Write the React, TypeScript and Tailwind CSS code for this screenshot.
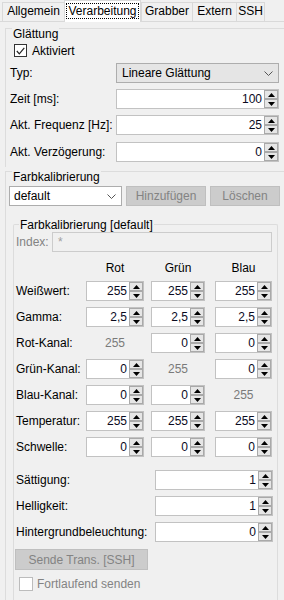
import React from 'react';

const FONT = "font-['Liberation_Sans',Arial,sans-serif]";

function Arrow({ up }: { up?: boolean }) {
  return (
    <div className="flex-1 flex items-center justify-center bg-[#e6e6e6] border border-[#a9a9a9]">
      <svg width="7" height="4" viewBox="0 0 7 4">
        <path d={up ? 'M0 4 L3.5 0 L7 4Z' : 'M0 0 L3.5 4 L7 0Z'} fill="#000" />
      </svg>
    </div>
  );
}

function Spin({ value, w }: { value: string; w: string }) {
  return (
    <div className={`${w} h-[20px] flex border border-[#c2c2c2] bg-white`}>
      <span className="flex-1 text-right pr-[2px] leading-[18px] text-[#0a0a1e]">{value}</span>
      <div className="w-[14px] flex flex-col">
        <Arrow up />
        <Arrow />
      </div>
    </div>
  );
}

function Chevron() {
  return (
    <svg width="9" height="5" viewBox="0 0 9 5" className="shrink-0">
      <path d="M0.5 0.5 L4.5 4.5 L8.5 0.5" fill="none" stroke="#555" strokeWidth="1" />
    </svg>
  );
}

function Tab({ label, w, active }: { label: string; w: string; active?: boolean }) {
  if (active) {
    return (
      <div className={`${w} h-[22px] -mb-px bg-white border-t border-l border-r border-[#d9d9d9] flex items-start justify-center pt-[2px]`}>
        <span className="border border-dotted border-black px-[1px] leading-[14px]">{label}</span>
      </div>
    );
  }
  return (
    <div className={`${w} h-[19px] border-t border-l border-[#d9d9d9] flex items-center justify-center leading-[14px] pb-[2px]`}>
      {label}
    </div>
  );
}

function ColRow({ label, cells }: { label: string; cells: string[] }) {
  const widths = ['w-[58px]', 'w-[54px]', 'w-[57px]'];
  const margins = ['ml-0', 'ml-[7px]', 'ml-[10px]'];
  return (
    <div className="flex items-center h-[20px] mt-[6px]">
      <span className="w-[72px] pl-[2px]">{label}</span>
      {cells.map((c, i) =>
        c.startsWith('#') ? (
          <span key={i} className={`${widths[i]} ${margins[i]} text-center text-[#7a7a7a]`}>{c.slice(1)}</span>
        ) : (
          <div key={i} className={margins[i]}>
            <Spin value={c} w={widths[i]} />
          </div>
        ),
      )}
    </div>
  );
}

export default function App() {
  return (
    <div className={`w-[284px] h-[600px] overflow-hidden bg-[#f0f0f0] text-[12px] text-black ${FONT}`}>
      {/* Tabs */}
      <div className="h-[22px] flex items-end pl-[2px] border-b border-[#d9d9d9]">
        <Tab label="Allgemein" w="w-[62px]" />
        <Tab label="Verarbeitung" w="w-[77px]" active />
        <Tab label="Grabber" w="w-[51px]" />
        <Tab label="Extern" w="w-[44px]" />
        <div className="w-[29px] h-[19px] border-t border-l border-r border-[#d9d9d9] flex items-center justify-center leading-[14px] pb-[2px]">SSH</div>
      </div>

      <div className="pl-[5px] pt-[6px]">
        {/* Glättung */}
        <div className="border-t border-l border-[#dcdcdc] pb-[5px]">
          <div className="-mt-[2px] ml-[6px] w-fit px-[1px] bg-[#f0f0f0] leading-[14px]">Glättung</div>
          <div className="flex items-center h-[13px] mt-[3px] ml-[8px]">
            <div className="w-[13px] h-[13px] border border-[#333] bg-white flex items-center justify-center">
              <svg width="9" height="8" viewBox="0 0 9 8">
                <path d="M0.8 4 L3.3 6.8 L8.3 0.8" fill="none" stroke="#222" strokeWidth="1.2" />
              </svg>
            </div>
            <span className="ml-[5px]">Aktiviert</span>
          </div>
          <div className="flex items-center h-[20px] mt-[6px]">
            <span className="w-[110px] pl-[4px]">Typ:</span>
            <div className="w-[163px] h-[20px] flex items-center justify-between px-[5px] bg-[#e5e5e5] border border-[#adadad]">
              <span>Lineare Glättung</span>
              <Chevron />
            </div>
          </div>
          <div className="flex items-center h-[20px] mt-[6px]">
            <span className="w-[110px] pl-[4px]">Zeit [ms]:</span>
            <Spin value="100" w="w-[163px]" />
          </div>
          <div className="flex items-center h-[20px] mt-[6px]">
            <span className="w-[110px] pl-[4px]">Akt. Frequenz [Hz]:</span>
            <Spin value="25" w="w-[163px]" />
          </div>
          <div className="flex items-center h-[20px] mt-[7px]">
            <span className="w-[110px] pl-[4px]">Akt. Verzögerung:</span>
            <Spin value="0" w="w-[163px]" />
          </div>
        </div>

        {/* Farbkalibrierung */}
        <div className="border-t border-l border-[#dcdcdc] mt-[4px]">
          <div className="-mt-[2px] ml-[6px] w-fit px-[1px] bg-[#f0f0f0] leading-[14px]">Farbkalibrierung</div>
          <div className="flex items-center h-[20px] mt-[2px]">
            <div className="ml-[3px] w-[113px] h-[20px] flex items-center justify-between pl-[4px] pr-[5px] bg-white border border-[#adadad]">
              <span>default</span>
              <Chevron />
            </div>
            <div className="ml-[4px] w-[80px] h-[20px] flex items-center justify-center bg-[#cccccc] border border-[#bfbfbf] text-[#838383]">Hinzufügen</div>
            <div className="ml-[4px] w-[70px] h-[20px] flex items-center justify-center bg-[#cccccc] border border-[#bfbfbf] text-[#838383]">Löschen</div>
          </div>

          {/* Inner group */}
          <div className="ml-[7px] mt-[18px] w-[265px] h-[400px] border-t border-l border-r border-[#dcdcdc] rounded-t-[2px]">
            <div className="-mt-[7px] ml-[5px] w-fit px-[1px] bg-[#f0f0f0] leading-[14px]">Farbkalibrierung [default]</div>
            <div className="flex items-center h-[20px]">
              <span className="w-[38px] pl-[2px] text-[#838383]">Index:</span>
              <div className="w-[220px] h-[20px] border border-[#cccccc] bg-[#f0f0f0] pl-[5px] text-[#a0a0a0] leading-[18px]">*</div>
            </div>
            <div className="flex items-center h-[14px] mt-[9px] leading-[14px]">
              <span className="w-[72px]" />
              <span className="w-[58px] text-center">Rot</span>
              <span className="w-[54px] ml-[7px] text-center">Grün</span>
              <span className="w-[57px] ml-[10px] text-center">Blau</span>
            </div>
            <ColRow label="Weißwert:" cells={['255', '255', '255']} />
            <ColRow label="Gamma:" cells={['2,5', '2,5', '2,5']} />
            <ColRow label="Rot-Kanal:" cells={['#255', '0', '0']} />
            <ColRow label="Grün-Kanal:" cells={['0', '#255', '0']} />
            <ColRow label="Blau-Kanal:" cells={['0', '0', '#255']} />
            <ColRow label="Temperatur:" cells={['255', '255', '255']} />
            <ColRow label="Schwelle:" cells={['0', '0', '0']} />

            <div className="flex items-center h-[20px] mt-[13px]">
              <span className="w-[141px] pl-[2px]">Sättigung:</span>
              <Spin value="1" w="w-[118px]" />
            </div>
            <div className="flex items-center h-[20px] mt-[6px]">
              <span className="w-[141px] pl-[2px]">Helligkeit:</span>
              <Spin value="1" w="w-[118px]" />
            </div>
            <div className="flex items-center h-[20px] mt-[6px]">
              <span className="w-[141px] pl-[2px]">Hintergrundbeleuchtung:</span>
              <Spin value="0" w="w-[118px]" />
            </div>
            <div className="ml-[1px] mt-[7px] w-[133px] h-[21px] flex items-center justify-center bg-[#cccccc] border border-[#bfbfbf] text-[#838383]">
              Sende Trans. [SSH]
            </div>
            <div className="flex items-center h-[14px] mt-[7px] ml-[5px]">
              <div className="w-[14px] h-[14px] border border-[#bcbcbc] bg-white" />
              <span className="ml-[4px] text-[#838383]">Fortlaufend senden</span>
            </div>
          </div>
        </div>
      </div>
    </div>
  );
}
